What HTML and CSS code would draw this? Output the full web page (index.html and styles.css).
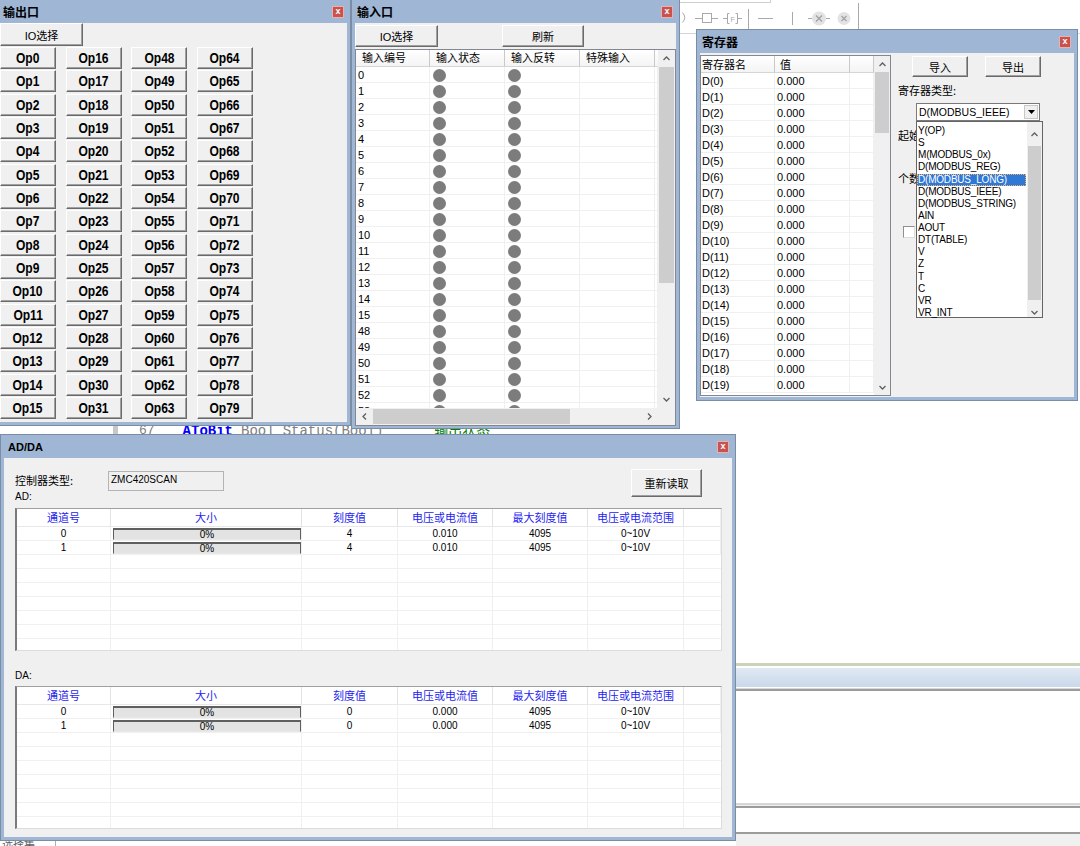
FILE: index.html
```html
<!DOCTYPE html>
<html lang="zh-CN">
<head>
<meta charset="UTF-8">
<meta name="viewport" content="width=device-width, initial-scale=1.0">
<title>IO 调试</title>
<link rel="stylesheet" href="styles.css">
</head>
<body>
<div class="desk">

  <!-- editor behind the windows -->
  <div class="tb-corner"></div>
  <div class="toolbar">
    <svg width="200" height="34" viewBox="0 0 200 34">
      <g fill="none" stroke="#a9a9a9" stroke-width="1">
        <path d="M2.5 12.5 Q7 17.5 2.5 22.5"/>
        <path d="M15 18.5h7.5 M31.5 18.5h6.5"/>
        <rect x="22.5" y="13.5" width="9" height="9"/>
        <path d="M43 18.5h4 M58 18.5h4 M49.5 13.5h-2v10h2 M55.5 13.5h2v10h-2"/>
        <path d="M68.5 9v24 M78 18.5h15 M112.5 12v13 M178.5 3v27"/>
        <path d="M128 18.5h4 M146 18.5h4"/>
      </g>
      <text x="50.5" y="21.5" font-size="7" font-family="Liberation Sans" fill="#a9a9a9">F</text>
      <circle cx="139" cy="18.5" r="7" fill="#e3e3e3"/>
      <path d="M136 15.5l6 6 M142 15.5l-6 6" stroke="#a0a0a0" stroke-width="1.2"/>
      <circle cx="164" cy="18.5" r="6.5" fill="#e3e3e3"/>
      <path d="M161.5 16l5 5 M166.5 16l-5 5" stroke="#a0a0a0" stroke-width="1.1"/>
    </svg>
  </div>

  <div class="code-strip">
    <span class="gutter"></span>
    <span class="ln">67</span>
    <span class="kw">AToBit</span>
    <span class="tx">Bool</span>
    <span class="tx2">Status(Bool)</span>
    <span class="cm">' 输出状态</span>
  </div>

  <div class="dock">
    <div class="dock-line"></div>
    <div class="dock-bar"></div>
    <div class="dock-edge"></div>
    <div class="dock-pane"></div>
    <div class="dock-edge2"></div>
    <div class="dock-pane2"></div>
    <div class="dock-edge3"></div>
  </div>

  <div class="status-tab">选择集</div>

  <!-- 输出口 -->
  <div class="win out-win">
    <div class="win-title"><span>输出口</span><span class="win-close">x</span></div>
    <div class="win-body">
      <div class="btn io-btn">IO选择</div>
      <div class="op-grid">
        <div class="btn op"><span>Op0</span></div>
        <div class="btn op"><span>Op1</span></div>
        <div class="btn op"><span>Op2</span></div>
        <div class="btn op"><span>Op3</span></div>
        <div class="btn op"><span>Op4</span></div>
        <div class="btn op"><span>Op5</span></div>
        <div class="btn op"><span>Op6</span></div>
        <div class="btn op"><span>Op7</span></div>
        <div class="btn op"><span>Op8</span></div>
        <div class="btn op"><span>Op9</span></div>
        <div class="btn op"><span>Op10</span></div>
        <div class="btn op"><span>Op11</span></div>
        <div class="btn op"><span>Op12</span></div>
        <div class="btn op"><span>Op13</span></div>
        <div class="btn op"><span>Op14</span></div>
        <div class="btn op"><span>Op15</span></div>
        <div class="btn op"><span>Op16</span></div>
        <div class="btn op"><span>Op17</span></div>
        <div class="btn op"><span>Op18</span></div>
        <div class="btn op"><span>Op19</span></div>
        <div class="btn op"><span>Op20</span></div>
        <div class="btn op"><span>Op21</span></div>
        <div class="btn op"><span>Op22</span></div>
        <div class="btn op"><span>Op23</span></div>
        <div class="btn op"><span>Op24</span></div>
        <div class="btn op"><span>Op25</span></div>
        <div class="btn op"><span>Op26</span></div>
        <div class="btn op"><span>Op27</span></div>
        <div class="btn op"><span>Op28</span></div>
        <div class="btn op"><span>Op29</span></div>
        <div class="btn op"><span>Op30</span></div>
        <div class="btn op"><span>Op31</span></div>
        <div class="btn op"><span>Op48</span></div>
        <div class="btn op"><span>Op49</span></div>
        <div class="btn op"><span>Op50</span></div>
        <div class="btn op"><span>Op51</span></div>
        <div class="btn op"><span>Op52</span></div>
        <div class="btn op"><span>Op53</span></div>
        <div class="btn op"><span>Op54</span></div>
        <div class="btn op"><span>Op55</span></div>
        <div class="btn op"><span>Op56</span></div>
        <div class="btn op"><span>Op57</span></div>
        <div class="btn op"><span>Op58</span></div>
        <div class="btn op"><span>Op59</span></div>
        <div class="btn op"><span>Op60</span></div>
        <div class="btn op"><span>Op61</span></div>
        <div class="btn op"><span>Op62</span></div>
        <div class="btn op"><span>Op63</span></div>
        <div class="btn op"><span>Op64</span></div>
        <div class="btn op"><span>Op65</span></div>
        <div class="btn op"><span>Op66</span></div>
        <div class="btn op"><span>Op67</span></div>
        <div class="btn op"><span>Op68</span></div>
        <div class="btn op"><span>Op69</span></div>
        <div class="btn op"><span>Op70</span></div>
        <div class="btn op"><span>Op71</span></div>
        <div class="btn op"><span>Op72</span></div>
        <div class="btn op"><span>Op73</span></div>
        <div class="btn op"><span>Op74</span></div>
        <div class="btn op"><span>Op75</span></div>
        <div class="btn op"><span>Op76</span></div>
        <div class="btn op"><span>Op77</span></div>
        <div class="btn op"><span>Op78</span></div>
        <div class="btn op"><span>Op79</span></div>
      </div>
    </div>
  </div>

  <!-- 输入口 -->
  <div class="win in-win">
    <div class="win-title"><span>输入口</span><span class="win-close">x</span></div>
    <div class="win-body">
      <div class="in-btns">
        <div class="btn in-io">IO选择</div>
        <div class="btn in-refresh">刷新</div>
      </div>
      <div class="lv in-lv">
        <div class="lv-main">
          <div class="in-row lv-head"><span>输入编号</span><span>输入状态</span><span>输入反转</span><span>特殊输入</span><span></span></div>
          <div class="in-row"><span>0</span><span><i class="led"></i></span><span><i class="led"></i></span><span></span><span></span></div>
          <div class="in-row"><span>1</span><span><i class="led"></i></span><span><i class="led"></i></span><span></span><span></span></div>
          <div class="in-row"><span>2</span><span><i class="led"></i></span><span><i class="led"></i></span><span></span><span></span></div>
          <div class="in-row"><span>3</span><span><i class="led"></i></span><span><i class="led"></i></span><span></span><span></span></div>
          <div class="in-row"><span>4</span><span><i class="led"></i></span><span><i class="led"></i></span><span></span><span></span></div>
          <div class="in-row"><span>5</span><span><i class="led"></i></span><span><i class="led"></i></span><span></span><span></span></div>
          <div class="in-row"><span>6</span><span><i class="led"></i></span><span><i class="led"></i></span><span></span><span></span></div>
          <div class="in-row"><span>7</span><span><i class="led"></i></span><span><i class="led"></i></span><span></span><span></span></div>
          <div class="in-row"><span>8</span><span><i class="led"></i></span><span><i class="led"></i></span><span></span><span></span></div>
          <div class="in-row"><span>9</span><span><i class="led"></i></span><span><i class="led"></i></span><span></span><span></span></div>
          <div class="in-row"><span>10</span><span><i class="led"></i></span><span><i class="led"></i></span><span></span><span></span></div>
          <div class="in-row"><span>11</span><span><i class="led"></i></span><span><i class="led"></i></span><span></span><span></span></div>
          <div class="in-row"><span>12</span><span><i class="led"></i></span><span><i class="led"></i></span><span></span><span></span></div>
          <div class="in-row"><span>13</span><span><i class="led"></i></span><span><i class="led"></i></span><span></span><span></span></div>
          <div class="in-row"><span>14</span><span><i class="led"></i></span><span><i class="led"></i></span><span></span><span></span></div>
          <div class="in-row"><span>15</span><span><i class="led"></i></span><span><i class="led"></i></span><span></span><span></span></div>
          <div class="in-row"><span>48</span><span><i class="led"></i></span><span><i class="led"></i></span><span></span><span></span></div>
          <div class="in-row"><span>49</span><span><i class="led"></i></span><span><i class="led"></i></span><span></span><span></span></div>
          <div class="in-row"><span>50</span><span><i class="led"></i></span><span><i class="led"></i></span><span></span><span></span></div>
          <div class="in-row"><span>51</span><span><i class="led"></i></span><span><i class="led"></i></span><span></span><span></span></div>
          <div class="in-row"><span>52</span><span><i class="led"></i></span><span><i class="led"></i></span><span></span><span></span></div>
          <div class="in-row"><span>53</span><span><i class="led"></i></span><span><i class="led"></i></span><span></span><span></span></div>
        </div>
        <div class="vs">
          <div class="sb-btn"><svg width="7" height="5"><polyline points="0.5,4 3.5,1 6.5,4" fill="none" stroke="#606060" stroke-width="1.3"/></svg></div>
          <div class="vs-thumb in-thumb"></div>
          <div class="sb-track"></div>
          <div class="sb-btn"><svg width="7" height="5"><polyline points="0.5,1 3.5,4 6.5,1" fill="none" stroke="#606060" stroke-width="1.3"/></svg></div>
        </div>
        <div class="hs">
          <div class="sb-btn"><svg width="5" height="7"><polyline points="4,0.5 1,3.5 4,6.5" fill="none" stroke="#606060" stroke-width="1.3"/></svg></div>
          <div class="hs-thumb"></div>
          <div class="sb-track"></div>
          <div class="sb-btn"><svg width="5" height="7"><polyline points="1,0.5 4,3.5 1,6.5" fill="none" stroke="#606060" stroke-width="1.3"/></svg></div>
        </div>
        <div class="sb-corner"></div>
      </div>
    </div>
  </div>

  <!-- 寄存器 -->
  <div class="win reg-win">
    <div class="win-title"><span>寄存器</span><span class="win-close">x</span></div>
    <div class="win-body reg-body">
      <div class="lv reg-lv">
        <div class="lv-main">
          <div class="reg-row lv-head"><span>寄存器名</span><span>值</span><span></span></div>
          <div class="reg-row"><span>D(0)</span><span>0.000</span><span></span></div>
          <div class="reg-row"><span>D(1)</span><span>0.000</span><span></span></div>
          <div class="reg-row"><span>D(2)</span><span>0.000</span><span></span></div>
          <div class="reg-row"><span>D(3)</span><span>0.000</span><span></span></div>
          <div class="reg-row"><span>D(4)</span><span>0.000</span><span></span></div>
          <div class="reg-row"><span>D(5)</span><span>0.000</span><span></span></div>
          <div class="reg-row"><span>D(6)</span><span>0.000</span><span></span></div>
          <div class="reg-row"><span>D(7)</span><span>0.000</span><span></span></div>
          <div class="reg-row"><span>D(8)</span><span>0.000</span><span></span></div>
          <div class="reg-row"><span>D(9)</span><span>0.000</span><span></span></div>
          <div class="reg-row"><span>D(10)</span><span>0.000</span><span></span></div>
          <div class="reg-row"><span>D(11)</span><span>0.000</span><span></span></div>
          <div class="reg-row"><span>D(12)</span><span>0.000</span><span></span></div>
          <div class="reg-row"><span>D(13)</span><span>0.000</span><span></span></div>
          <div class="reg-row"><span>D(14)</span><span>0.000</span><span></span></div>
          <div class="reg-row"><span>D(15)</span><span>0.000</span><span></span></div>
          <div class="reg-row"><span>D(16)</span><span>0.000</span><span></span></div>
          <div class="reg-row"><span>D(17)</span><span>0.000</span><span></span></div>
          <div class="reg-row"><span>D(18)</span><span>0.000</span><span></span></div>
          <div class="reg-row"><span>D(19)</span><span>0.000</span><span></span></div>
        </div>
        <div class="vs">
          <div class="sb-btn"><svg width="7" height="5"><polyline points="0.5,4 3.5,1 6.5,4" fill="none" stroke="#606060" stroke-width="1.3"/></svg></div>
          <div class="vs-thumb reg-thumb"></div>
          <div class="sb-track"></div>
          <div class="sb-btn"><svg width="7" height="5"><polyline points="0.5,1 3.5,4 6.5,1" fill="none" stroke="#606060" stroke-width="1.3"/></svg></div>
        </div>
      </div>

      <div class="reg-side">
        <div class="reg-btns">
          <div class="btn reg-btn">导入</div>
          <div class="btn reg-btn">导出</div>
        </div>
        <div class="reg-label">寄存器类型:</div>
        <div class="combo">
          <span>D(MODBUS_IEEE)</span>
          <span class="combo-arrow"><svg width="7" height="4"><polygon points="0,0 7,0 3.5,4" fill="#000"/></svg></span>
        </div>
        <div class="reg-label start-label">起始</div>
        <div class="reg-label count-label">个数</div>
        <div class="check"></div>

        <div class="drop">
          <div class="drop-items">
            <div>Y(OP)</div>
            <div>S</div>
            <div>M(MODBUS_0x)</div>
            <div>D(MODBUS_REG)</div>
            <div class="sel">D(MODBUS_LONG)</div>
            <div>D(MODBUS_IEEE)</div>
            <div>D(MODBUS_STRING)</div>
            <div>AIN</div>
            <div>AOUT</div>
            <div>DT(TABLE)</div>
            <div>V</div>
            <div>Z</div>
            <div>T</div>
            <div>C</div>
            <div>VR</div>
            <div>VR_INT</div>
          </div>
          <div class="vs drop-vs">
            <div class="sb-btn"><svg width="7" height="5"><polyline points="0.5,4 3.5,1 6.5,4" fill="none" stroke="#606060" stroke-width="1.3"/></svg></div>
            <div class="vs-thumb drop-thumb"></div>
            <div class="sb-track"></div>
            <div class="sb-btn"><svg width="7" height="5"><polyline points="0.5,1 3.5,4 6.5,1" fill="none" stroke="#606060" stroke-width="1.3"/></svg></div>
          </div>
        </div>
      </div>
    </div>
  </div>

  <!-- AD/DA -->
  <div class="win ad-win">
    <div class="win-title"><span class="ad-title">AD/DA</span><span class="win-close">x</span></div>
    <div class="win-body ad-body">
      <div class="ctl-row">
        <span class="ctl-label">控制器类型:</span>
        <span class="ctl-box">ZMC420SCAN</span>
        <div class="btn reread">重新读取</div>
      </div>
      <div class="sec-label">AD:</div>
      <div class="ch-list">
        <div class="ch-row ch-head"><span>通道号</span><span>大小</span><span>刻度值</span><span>电压或电流值</span><span>最大刻度值</span><span>电压或电流范围</span><span></span></div>
        <div class="ch-row"><span>0</span><span><b class="bar">0%</b></span><span>4</span><span>0.010</span><span>4095</span><span>0~10V</span><span></span></div>
        <div class="ch-row"><span>1</span><span><b class="bar">0%</b></span><span>4</span><span>0.010</span><span>4095</span><span>0~10V</span><span></span></div>
        <div class="ch-fill"></div>
      </div>
      <div class="sec-label da-label">DA:</div>
      <div class="ch-list da-list">
        <div class="ch-row ch-head"><span>通道号</span><span>大小</span><span>刻度值</span><span>电压或电流值</span><span>最大刻度值</span><span>电压或电流范围</span><span></span></div>
        <div class="ch-row"><span>0</span><span><b class="bar">0%</b></span><span>0</span><span>0.000</span><span>4095</span><span>0~10V</span><span></span></div>
        <div class="ch-row"><span>1</span><span><b class="bar">0%</b></span><span>0</span><span>0.000</span><span>4095</span><span>0~10V</span><span></span></div>
        <div class="ch-fill"></div>
      </div>
    </div>
  </div>

</div>
</body>
</html>
```

FILE: styles.css
```css
* {
    box-sizing: border-box;
}

body {
    margin: 0;
    background: #fff;
    font-family: "Liberation Sans", "Noto Sans CJK SC", sans-serif;
    font-size: 11px;
    color: #000;
}

.desk {
    position: relative;
    width: 1080px;
    height: 846px;
    overflow: hidden;
    background: #fff;
}

/* ---------- editor behind the windows ---------- */

.tb-corner {
    position: absolute;
    left: 680px;
    top: -1px;
    width: 91px;
    height: 4px;
    border-right: 1px solid #cfcfcf;
    border-bottom: 1px solid #cfcfcf;
}

.toolbar {
    position: absolute;
    left: 680px;
    top: 0;
    width: 400px;
    height: 34px;
    border-bottom: 1px solid #d4d4d4;
}

.toolbar svg {
    display: block;
}

.code-strip {
    position: absolute;
    left: 0;
    top: 423px;
    width: 740px;
    height: 16px;
    display: flex;
    align-items: center;
    font: 14px/16px "Liberation Mono", monospace;
    color: #808080;
}

.code-strip .gutter {
    width: 5px;
    height: 16px;
    margin-left: 113px;
    background: #c8c8c8;
}

.code-strip .ln {
    margin-left: 21px;
    font-size: 13px;
}

.code-strip .kw {
    margin-left: 28px;
    color: #0000ff;
    font-weight: bold;
}

.code-strip .tx {
    margin-left: 8px;
}

.code-strip .tx2 {
    margin-left: 8px;
}

.code-strip .cm {
    margin-left: 34px;
    color: #008000;
    font-family: "Liberation Mono", "Noto Sans CJK SC", monospace;
}

.dock {
    position: absolute;
    left: 736px;
    top: 663px;
    right: 0;
    bottom: 0;
    display: flex;
    flex-direction: column;
    background: #f0f0f0;
}

.dock-line {
    height: 5px;
    border-top: 3px solid #cbd4bb;
    background: #fff;
}

.dock-bar {
    height: 19px;
    background: linear-gradient(#e1e9f3, #c9d8ea);
}

.dock-edge {
    height: 4px;
    border-top: 1px solid #fff;
    border-bottom: 2px solid #9c9c9c;
    background: #d8d8d8;
}

.dock-pane {
    height: 112px;
    background: #fff;
}

.dock-edge2 {
    height: 5px;
    border-top: 2px solid #d6d6d6;
    border-bottom: 2px solid #9c9c9c;
    background: #eeeeee;
}

.dock-pane2 {
    height: 24px;
    background: #fff;
}

.dock-edge3 {
    height: 2px;
    background: #9c9c9c;
}

.status-tab {
    position: absolute;
    left: 0;
    top: 836px;
    width: 56px;
    height: 14px;
    padding-left: 2px;
    border-right: 1px solid #b0b0b0;
    color: #606060;
    line-height: 14px;
    font-family: "Noto Sans CJK SC", sans-serif;
}

/* ---------- window chrome ---------- */

.win {
    position: absolute;
    display: flex;
    flex-direction: column;
    background: #9fb7d4;
    border: 1px solid #7b8da5;
}

.win-title {
    flex: none;
    height: 23px;
    display: flex;
    align-items: center;
    justify-content: space-between;
    padding: 0 6px 0 5px;
    font: bold 12px "Noto Sans CJK SC", sans-serif;
}

.win-close {
    width: 12px;
    height: 12px;
    background: #c8524d;
    border: 1px solid #e9b0ad;
    color: #fff;
    font: bold 9px/9px "Liberation Sans", sans-serif;
    text-align: center;
}

.win-body {
    flex: 1;
    min-height: 0;
    margin: 0 3px 3px;
    background: #f0f0f0;
    display: flex;
    flex-direction: column;
}

.btn {
    display: flex;
    align-items: center;
    justify-content: center;
    background: #f0f0f0;
    border: 1px solid;
    border-color: #fff #6a6a6a #6a6a6a #fff;
    box-shadow: inset -1px -1px #a0a0a0;
    font-family: "Liberation Sans", "Noto Sans CJK SC", sans-serif;
    font-size: 11px;
}

/* ---------- 输出口 ---------- */

.out-win {
    left: -4px;
    top: -1px;
    width: 355px;
    height: 427px;
}

.out-win .win-title {
    padding-left: 6px;
}

.io-btn {
    width: 83px;
    height: 23px;
}

.op-grid {
    margin-top: 1px;
    display: grid;
    grid-auto-flow: column;
    grid-template-rows: repeat(16, 22px);
    grid-template-columns: repeat(4, 56px);
    row-gap: 1.33px;
    column-gap: 9.6px;
}

.op span {
    display: inline-block;
    font: bold 14px "Liberation Sans", sans-serif;
    transform: scaleX(0.86);
}

/* ---------- 输入口 ---------- */

.in-win {
    left: 351px;
    top: -1px;
    width: 329px;
    height: 430px;
}

.in-win .win-body {
    margin-bottom: 2px;
}

.in-btns {
    display: flex;
    margin-top: 2px;
    height: 22px;
}

.in-io {
    width: 83px;
}

.in-refresh {
    width: 82px;
    margin-left: 64px;
}

.lv {
    display: grid;
    background: #fff;
    border: 1px solid #828790;
    overflow: hidden;
}

.in-lv {
    flex: 1;
    margin-top: 2px;
    grid-template-columns: 1fr 17px;
    grid-template-rows: 1fr 17px;
}

.lv-main {
    overflow: hidden;
}

.in-row {
    display: grid;
    grid-template-columns: 74px 75px 75px 75px 1fr;
    height: 16px;
}

.in-row.lv-head {
    height: 17px;
}

.in-row span,
.reg-row span {
    border-right: 1px solid #f0f0f0;
    border-bottom: 1px solid #f0f0f0;
    padding-left: 2px;
    line-height: 16px;
    white-space: nowrap;
    overflow: hidden;
}

.lv-head span {
    border-right-color: #c9c9c9;
    border-bottom-color: #d5d5d5;
    padding-left: 6px;
    background: linear-gradient(#fff, #f4f4f4);
    font-family: "Noto Sans CJK SC", sans-serif;
    line-height: 15px;
}

.led {
    display: block;
    width: 13px;
    height: 13px;
    margin: 2px 0 0 1px;
    border-radius: 50%;
    background: #7c7c7c;
}

.vs {
    display: flex;
    flex-direction: column;
    background: #f0f0f0;
}

.hs {
    display: flex;
    background: #f0f0f0;
}

.sb-btn {
    flex: none;
    width: 17px;
    height: 17px;
    display: flex;
    align-items: center;
    justify-content: center;
}

.sb-btn svg {
    display: block;
}

.sb-track {
    flex: 1;
}

.vs-thumb {
    flex: none;
    margin: 0 1px;
    background: #cdcdcd;
}

.in-thumb {
    height: 216px;
}

.hs-thumb {
    flex: none;
    width: 197px;
    margin: 1px 0;
    background: #cdcdcd;
}

.sb-corner {
    background: #f0f0f0;
}

/* ---------- 寄存器 ---------- */

.reg-win {
    left: 696px;
    top: 29px;
    width: 382px;
    height: 372px;
}

.reg-body {
    flex-direction: row;
}

.reg-lv {
    flex: none;
    width: 191px;
    margin: 2px 0 1px;
    grid-template-columns: 1fr 16px;
}

.reg-lv .vs .sb-btn {
    width: 16px;
    height: 16px;
}

.reg-thumb {
    height: 61px;
}

.reg-row {
    display: grid;
    grid-template-columns: 74px 75px 1fr;
    height: 16px;
}

.reg-row.lv-head {
    height: 17px;
}

.reg-row.lv-head span {
    padding-left: 5px;
    line-height: 16px;
}

.reg-row span:first-child {
    padding-left: 1px;
}

.reg-side {
    flex: 1;
    position: relative;
    padding: 3px 0 0 7px;
    display: flex;
    flex-direction: column;
    align-items: flex-start;
}

.reg-btns {
    display: flex;
    gap: 17px;
    margin-left: 14px;
}

.reg-btn {
    width: 56px;
    height: 21px;
    font-family: "Noto Sans CJK SC", sans-serif;
}

.reg-label {
    margin-top: 7px;
    height: 12px;
    line-height: 12px;
    font-family: "Noto Sans CJK SC", sans-serif;
    white-space: nowrap;
}

.combo {
    margin: 7px 0 0 18px;
    width: 124px;
    height: 18px;
    display: flex;
    align-items: center;
    justify-content: space-between;
    padding: 0 1px 0 2px;
    background: #fff;
    border: 1px solid #7a7a7a;
    font-size: 10.5px;
}

.combo-arrow {
    width: 14px;
    height: 14px;
    display: flex;
    align-items: center;
    justify-content: center;
    background: #f0f0f0;
    border: 1px solid #c8c8c8;
}

.combo-arrow svg {
    display: block;
}

/* labels mostly hidden by the open drop list */
.start-label,
.count-label {
    width: 18px;
    overflow: hidden;
}

.start-label {
    margin-top: 8px;
}

.count-label {
    margin-top: 31px;
}

.check {
    width: 12px;
    height: 12px;
    margin: 42px 0 0 5px;
    background: #fff;
    border: 1px solid #8f8f8f;
    border-right-color: #dcdcdc;
    border-bottom-color: #dcdcdc;
}

.drop {
    position: absolute;
    left: 25px;
    top: 68px;
    width: 127px;
    height: 197px;
    display: flex;
    background: #fff;
    border: 1px solid #646464;
}

.drop-items {
    flex: 1;
    padding-top: 3px;
    font-size: 10px;
    letter-spacing: -0.2px;
}

.drop-items div {
    height: 12.13px;
    line-height: 12px;
    padding-left: 1px;
    white-space: nowrap;
}

.drop-items .sel {
    width: 109px;
    background: #2f78d6;
    color: #fff;
    outline: 1px dotted #f0b060;
    outline-offset: -1px;
}

.drop-vs {
    width: 15px;
}

.drop-vs .sb-btn {
    width: 15px;
    height: 24px;
}

.drop-thumb {
    height: 154px;
}

/* ---------- AD/DA ---------- */

.ad-win {
    left: 0;
    top: 434px;
    width: 736px;
    height: 407px;
}

.ad-win .win-title {
    padding-left: 7px;
}

.ad-title {
    font: bold 11px "Liberation Sans", sans-serif;
}

.ad-body {
    padding-left: 11px;
}

.ctl-row {
    display: flex;
    align-items: flex-start;
    height: 22px;
    margin-top: 11px;
}

.ctl-label {
    width: 93px;
    line-height: 22px;
    font-family: "Noto Sans CJK SC", sans-serif;
}

.ctl-box {
    width: 116px;
    height: 20px;
    margin-top: 2px;
    padding: 2px 0 0 2px;
    border: 1px solid #b4b4b4;
    background: #f0f0f0;
    font-size: 10px;
    line-height: 12px;
}

.reread {
    width: 71px;
    height: 28px;
    margin: 0 30px 0 auto;
    font-family: "Noto Sans CJK SC", sans-serif;
}

.sec-label {
    height: 12px;
    line-height: 12px;
    padding-left: 0;
    font-size: 10px;
}

.da-label {
    margin-top: 19px;
}

.ch-list {
    width: 707px;
    height: 143px;
    margin-top: 5px;
    display: flex;
    flex-direction: column;
    background: #fff;
    border: 1px solid #dcdcdc;
    border-top-color: #a0a0a0;
    border-left: 2px solid #7a7a7a;
    overflow: hidden;
}

.da-list {
    margin-top: 4px;
}

.ch-row {
    flex: none;
    display: grid;
    grid-template-columns: 94px 191px 96px 95px 95px 96px 1fr;
    height: 14px;
}

.ch-row span {
    border-right: 1px solid #f0f0f0;
    border-bottom: 1px solid #f0f0f0;
    text-align: center;
    font-size: 10px;
    line-height: 13px;
    white-space: nowrap;
}

.ch-head {
    height: 18px;
}

.ch-head span {
    color: #2424f0;
    border-right-color: #e3e3e3;
    border-bottom-color: #e8e8e8;
    font-family: "Noto Sans CJK SC", sans-serif;
    font-size: 11px;
    line-height: 17px;
}

.ch-head span:last-child {
    border-right-color: #f0f0f0;
}

.bar {
    display: block;
    width: 188px;
    height: 12px;
    margin: 1px 0 0 2px;
    background: #e3e3e3;
    border: 1px solid #5f5f5f;
    border-top-width: 2px;
    border-bottom-color: #e8e8e8;
    font-weight: normal;
    font-size: 10px;
    line-height: 10px;
}

.ch-fill {
    flex: 1;
    background:
        linear-gradient(#f0f0f0, #f0f0f0) 93px 0 / 1px 100% no-repeat,
        linear-gradient(#f0f0f0, #f0f0f0) 284px 0 / 1px 100% no-repeat,
        linear-gradient(#f0f0f0, #f0f0f0) 380px 0 / 1px 100% no-repeat,
        linear-gradient(#f0f0f0, #f0f0f0) 475px 0 / 1px 100% no-repeat,
        linear-gradient(#f0f0f0, #f0f0f0) 570px 0 / 1px 100% no-repeat,
        linear-gradient(#f0f0f0, #f0f0f0) 666px 0 / 1px 100% no-repeat,
        repeating-linear-gradient(#fff 0 13px, #f0f0f0 13px 14px);
}
```
